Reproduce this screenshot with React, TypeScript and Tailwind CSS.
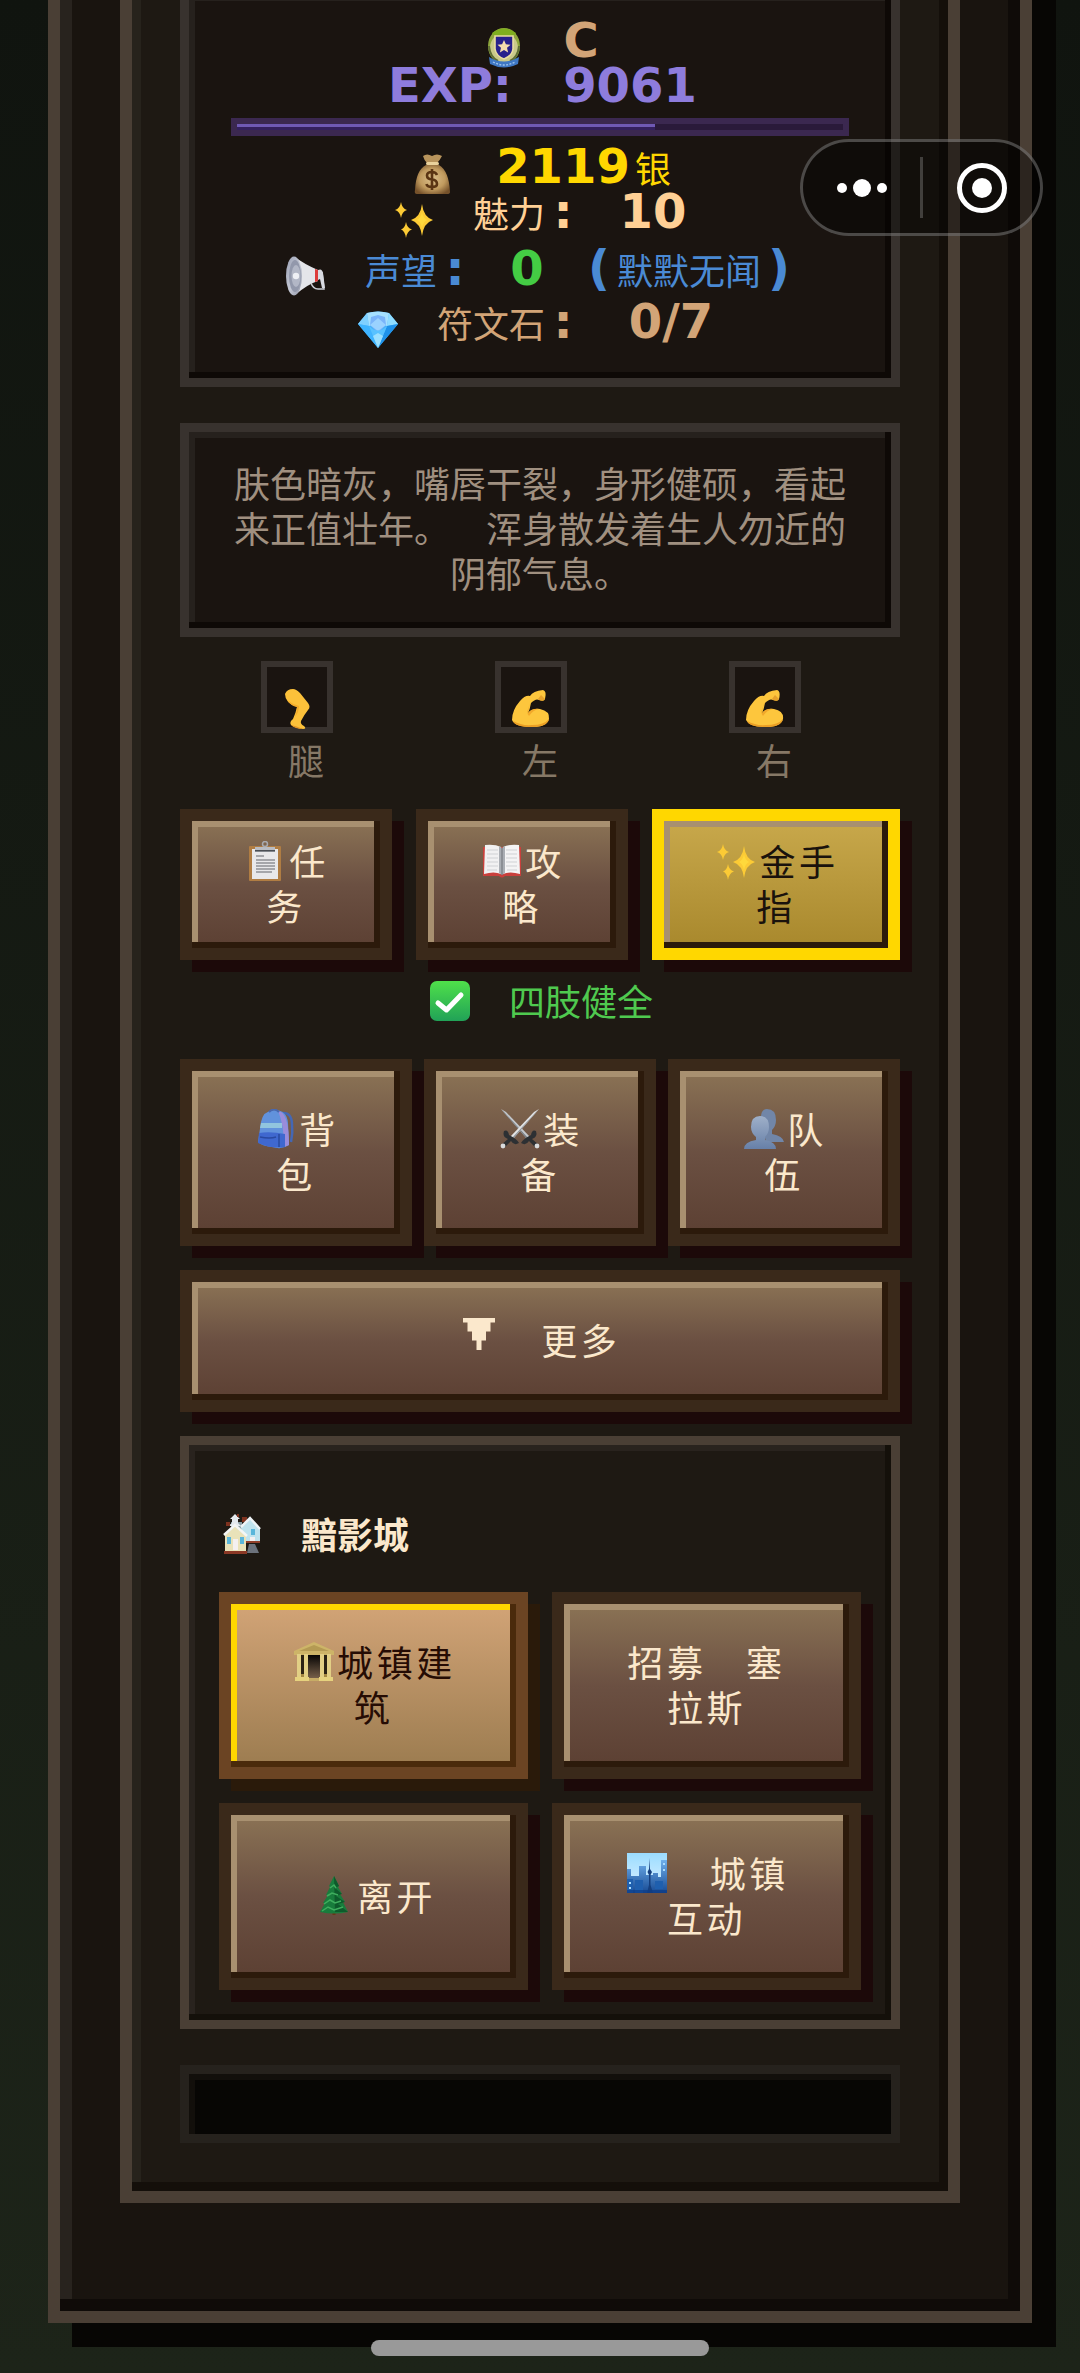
import type { ReactNode } from "react";

type IconProps = { className?: string };

const iconBase = "inline-block h-10 w-10 shrink-0";

function MedalIcon({ className = "" }: IconProps) {
  return (
    <svg viewBox="0 0 40 40" className={`${iconBase} ${className}`} aria-hidden="true">
      <ellipse cx="20" cy="18" rx="16" ry="18" fill="#8ea63c" />
      <ellipse cx="20" cy="20" rx="14" ry="15" fill="#c9c98a" />
      <path d="M8 5 Q20 -4 32 5 L29 9 H11Z" fill="#7fae1f" />
      <path d="M5 18 Q6 29 14 33" fill="none" stroke="#5e6d35" strokeWidth="2" />
      <path d="M35 18 Q34 29 26 33" fill="none" stroke="#5e6d35" strokeWidth="2" />
      <path d="M11 8 H29 V21 Q28 28 20 31 Q12 28 11 21Z" fill="#28218c" stroke="#e8dca0" strokeWidth="1.6" />
      <path d="M20 12 l1.9 4.3 4.6.4 -3.5 3.1 1.1 4.6 -4.1-2.4 -4.1 2.4 1.1-4.6 -3.5-3.1 4.6-.4z" fill="#f5dcae" />
      <path d="M5 29 Q20 38 35 29 L34 36 Q20 43 6 36Z" fill="#3f78c4" />
      <path d="M9 34 Q20 40 31 34" fill="none" stroke="#9cc4ee" strokeWidth="1.4" strokeDasharray="2 1.4" />
    </svg>
  );
}

function MoneyBagIcon({ className = "" }: IconProps) {
  return (
    <svg viewBox="0 0 40 40" className={`${iconBase} ${className}`} aria-hidden="true">
      <defs>
        <radialGradient id="bag" cx="50%" cy="48%" r="60%">
          <stop offset="0" stopColor="#dcc08c" />
          <stop offset="0.6" stopColor="#c09a5e" />
          <stop offset="1" stopColor="#75512a" />
        </radialGradient>
      </defs>
      <path d="M11 2 Q15 -1 20 2 Q25 -1 30 2 Q28 6 25 9 H15 Q12 6 11 2Z" fill="#b8945c" />
      <path d="M14 11 H27 Q37 17 38 38 Q38 40 35 40 H5 Q2 40 3 36 Q4 16 14 11Z" fill="url(#bag)" />
      <rect x="14" y="8" width="13" height="3" rx="1.5" fill="#ead29c" />
      <path d="M25 21 Q24 18 20 18 Q15 18 15 21.500 Q15 25 20 25.500 Q25 26 25 30 Q25 33 20 33 Q15 33 14.500 30 M20 15 V36" fill="none" stroke="#5b3513" strokeWidth="2.600" />
    </svg>
  );
}

function SparklesIcon({ className = "" }: IconProps) {
  return (
    <svg viewBox="0 0 40 40" className={`${iconBase} ${className}`} aria-hidden="true">
      <path d="M28 5 Q29.500 18 39 21 Q29.500 24 28 37 Q26.500 24 17 21 Q26.500 18 28 5Z" fill="#fccb35" />
      <path d="M28 13 Q29 19 33 21 Q29 23 28 29 Q27 23 23 21 Q27 19 28 13Z" fill="#ffd93c" />
      <path d="M7 3 Q8 9.500 13 11 Q8 12.500 7 19 Q6 12.500 1 11 Q6 9.500 7 3Z" fill="#fccb35" />
      <path d="M12 23 Q13 29 18 30.500 Q13 32 12 39 Q11 32 7 30.500 Q11 29 12 23Z" fill="#fccb35" />
    </svg>
  );
}

function MegaphoneIcon({ className = "" }: IconProps) {
  return (
    <svg viewBox="0 0 40 40" className={`${iconBase} ${className}`} aria-hidden="true">
      <defs>
        <linearGradient id="horn" x1="0" x2="1" y1="0" y2="1">
          <stop offset="0" stopColor="#9aa0b4" />
          <stop offset="0.55" stopColor="#c4c8d4" />
          <stop offset="1" stopColor="#8e93a5" />
        </linearGradient>
      </defs>
      <path d="M9 1 Q18 8 32 14 V25 Q22 28 9 39Z" fill="#e4e5ea" />
      <path d="M29 13 L32 14 V25 L29 26Z" fill="#dd3b3b" />
      <path d="M25 27 Q27 33 32 33 L38 33 L36 16" fill="none" stroke="#c9ccd4" strokeWidth="1.500" />
      <path d="M32 14 Q36 12 37 17 L39 32 H36 L34 23 L32 24Z" fill="#d8dae1" />
      <ellipse cx="8" cy="20" rx="8" ry="19.500" fill="url(#horn)" />
      <ellipse cx="9" cy="20" rx="6" ry="16" fill="#9298ab" />
      <ellipse cx="10" cy="20" rx="4.500" ry="11" fill="#b2b7c6" />
      <circle cx="10" cy="20" r="3.200" fill="#eef0f5" />
    </svg>
  );
}

function GemIcon({ className = "" }: IconProps) {
  return (
    <svg viewBox="0 0 40 40" className={`${iconBase} ${className}`} aria-hidden="true">
      <path d="M9 4 Q20 1 31 4 L40 15 L20 39 L0 15Z" fill="#45b2fb" />
      <path d="M9 4 L0 15 L11 17Z" fill="#7fd0ff" />
      <path d="M31 4 L40 15 L29 17Z" fill="#8fdcff" />
      <path d="M9 4 Q20 1 31 4 L29 17 Q20 12 11 17Z" fill="#a5e0ff" />
      <path d="M13 8 L20 6 L27 8 L28 16 L20 24 L12 16Z" fill="#79b4fa" />
      <path d="M12 16 L20 9 L28 16 L20 22Z" fill="#9ad2ff" />
      <path d="M0 15 L11 17 L20 39Z" fill="#3fb4ff" />
      <path d="M40 15 L29 17 L20 39Z" fill="#1f92ea" />
      <path d="M11 17 Q20 26 29 17 L20 39Z" fill="#58c2ff" />
      <path d="M15 27 L20 24 L25 27 L20 39Z" fill="#9be0ff" />
    </svg>
  );
}

function LegIcon({ className = "" }: IconProps) {
  return (
    <svg viewBox="0 0 40 40" className={`${iconBase} ${className}`} aria-hidden="true">
      <path d="M8 5 Q10 0 16 0 Q19 0 23 4 L31 14 Q34 18 31 21 Q27 26 24 32 Q23 35 27 37 Q30 40 26 40 Q18 39 14 36 Q12 33 16 30 Q19 23 20 18 Q8 14 8 5Z" fill="#fcc13a" />
      <path d="M10 11 Q14 17 20 18 Q20 23 18 28 Q22 23 22 17 Q15 15 10 11Z" fill="#f3ab2a" />
      <path d="M14 36 Q19 37 26 40 Q18 40 14 36Z" fill="#e29426" />
    </svg>
  );
}

function BicepsIcon({ className = "" }: IconProps) {
  return (
    <svg viewBox="0 0 40 40" className={`${iconBase} ${className}`} aria-hidden="true">
      <path d="M19 7 Q22 2 32 1 Q36 2 34 10 Q33 13 28 11 Q25 9 20 14 Q19 20 17 24 Q22 19 29 20 Q39 22 38 30 Q36 38 21 38 Q4 38 1 31 Q1 21 9 12 Q14 6 19 7Z" fill="#fdc63d" />
      <path d="M27 10 L30 6 L34 10 Q33 13 28 11Z" fill="#e6a12b" />
      <path d="M20 13 Q17 18 17 24 Q21 19 28 20 Q22 21 18 27 Q14 24 20 13Z" fill="#f2a92b" />
      <path d="M2 32 Q11 37 21 36 Q33 36 38 30 Q36 38 21 38 Q4 38 2 32Z" fill="#eb9f25" />
    </svg>
  );
}

function ClipboardIcon({ className = "" }: IconProps) {
  return (
    <svg viewBox="0 0 40 40" className={`${iconBase} ${className}`} aria-hidden="true">
      <rect x="3" y="5" width="32" height="35" rx="1" fill="#b07d43" />
      <rect x="6" y="8" width="26" height="30" fill="#e8e8ea" />
      <rect x="9" y="6" width="20" height="5" fill="#b9bcc2" />
      <rect x="9" y="9" width="20" height="1.500" fill="#4b4f55" />
      <circle cx="19" cy="3" r="2.500" fill="none" stroke="#a9abb0" strokeWidth="1.500" />
      <path d="M10 15 H18 M10 19 H29 M10 22 H29 M10 25 H29 M10 28 H29 M10 31 H26" stroke="#62656b" strokeWidth="1.200" />
    </svg>
  );
}

function BookIcon({ className = "" }: IconProps) {
  return (
    <svg viewBox="0 0 40 40" className={`${iconBase} ${className}`} aria-hidden="true">
      <path d="M1 6 H39 V35 H23 Q20 38 17 35 H1Z" fill="#c9403c" />
      <path d="M3 4 Q13 3 19 6 V33 Q12 30 2 33Z" fill="#f1f1f2" />
      <path d="M37 4 Q27 3 21 6 V33 Q28 30 38 33Z" fill="#f4f4f5" />
      <path d="M17 5 L20 7 L23 5 V32 L20 34 L17 32Z" fill="#aaaeb4" />
      <path d="M20 7 V34" stroke="#6d7076" strokeWidth="1" />
      <path d="M5 9 H16 M5 13 H16 M5 17 H16 M5 21 H16 M5 25 H16 M5 29 H15 M24 9 H35 M24 13 H35 M24 17 H35 M24 21 H35 M24 25 H35 M25 29 H35" stroke="#cfd1d4" strokeWidth="1" />
    </svg>
  );
}

function BackpackIcon({ className = "" }: IconProps) {
  return (
    <svg viewBox="0 0 40 40" className={`${iconBase} ${className}`} aria-hidden="true">
      <path d="M26 4 Q36 3 36 16 Q37 24 35 33" fill="none" stroke="#4467b4" strokeWidth="2.500" />
      <path d="M5 13 Q7 2 18 1 Q31 1 32 14 L33 36 Q26 41 16 38 Q6 37 2 33Z" fill="#6192dc" />
      <path d="M25 3 Q33 8 33 36 L28 38 Q28 15 22 2Z" fill="#998cdb" />
      <path d="M13 3 Q18 -2 23 3" fill="none" stroke="#4968ae" strokeWidth="2" />
      <path d="M5 14 H26 V19 H4Z" fill="#91c5de" />
      <path d="M3 24 Q14 22 29 25 L29 38 Q15 40 2 34Z" fill="#3f68cf" />
      <path d="M4 28 Q14 30 20 28 M23 25 V38" fill="none" stroke="#2949a0" strokeWidth="1.500" />
    </svg>
  );
}

function SwordsIcon({ className = "" }: IconProps) {
  return (
    <svg viewBox="0 0 40 40" className={`${iconBase} ${className}`} aria-hidden="true">
      <path d="M1 0 L6 3 L30 28 L27 30Z" fill="#c4c8cc" />
      <path d="M1 0 L4 3 L28 29 L27 30Z" fill="#767b80" />
      <path d="M39 0 L34 3 L10 28 L13 30Z" fill="#e2e4e6" />
      <path d="M39 0 L36 3 L12 29 L13 30Z" fill="#8d9297" />
      <path d="M4 22 Q8 20 9 26 Q17 30 19 34 Q14 37 11 32 L4 39 L1 36 L8 30 Q2 28 4 22Z" fill="#2d3033" />
      <path d="M36 22 Q32 20 31 26 Q23 30 21 34 Q26 37 29 32 L36 39 L39 36 L32 30 Q38 28 36 22Z" fill="#2d3033" />
      <circle cx="3" cy="37" r="2.400" fill="#d9dbdd" />
      <circle cx="37" cy="37" r="2.400" fill="#d9dbdd" />
    </svg>
  );
}

function PeopleIcon({ className = "" }: IconProps) {
  return (
    <svg viewBox="0 0 40 40" className={`${iconBase} ${className}`} aria-hidden="true">
      <defs>
        <linearGradient id="people" x1="0" x2="0" y1="0" y2="1">
          <stop offset="0" stopColor="#9fb0c9" />
          <stop offset="1" stopColor="#6780a8" />
        </linearGradient>
      </defs>
      <path d="M23 0 Q32 0 32 11 Q32 17 28 21 V25 Q39 27 40 33 H22 L17 12 Q16 0 23 0Z" fill="#7186a8" />
      <path d="M16 7 Q25 7 25 18 Q25 24 21 28 V31 Q32 33 32 40 H0 Q0 33 12 31 V28 Q7 24 7 18 Q7 7 16 7Z" fill="url(#people)" />
    </svg>
  );
}

function CheckIcon({ className = "" }: IconProps) {
  return (
    <svg viewBox="0 0 40 40" className={`${iconBase} ${className}`} aria-hidden="true">
      <defs>
        <linearGradient id="check" x1="0" x2="0" y1="0" y2="1">
          <stop offset="0" stopColor="#4fe04a" />
          <stop offset="1" stopColor="#21a257" />
        </linearGradient>
      </defs>
      <rect width="40" height="40" rx="7" fill="url(#check)" />
      <path d="M8 22 L16.500 29 L31 14" fill="none" stroke="#fff" strokeWidth="5" strokeLinecap="round" strokeLinejoin="round" />
    </svg>
  );
}

function HousesIcon({ className = "" }: IconProps) {
  return (
    <svg viewBox="0 0 40 40" className={`${iconBase} ${className}`} aria-hidden="true">
      <path d="M9 8 H20 V20 H9Z" fill="#8ba0a8" />
      <path d="M13 0 L18 5 H16 V9 L19 12 H6 L10 9 V5 H8Z" fill="#e4e9ee" />
      <path d="M4 8 H8 V12 H4Z M20 3 H25 V8 H20Z M15 0 H17 V3 H15Z" fill="#7d321f" />
      <path d="M19 13 L28 5 L38 15 V29 H22Z" fill="#bfe3ee" />
      <path d="M19 13 L28 4 L38 15" fill="none" stroke="#eef4f7" strokeWidth="2.500" />
      <path d="M23 29 H38 V27 H23Z" fill="#93402a" />
      <path d="M27 30 H33 L37 39 H25Z" fill="#6c727c" />
      <path d="M3 21 L13 12 L24 22 V37 H3Z" fill="#e9e2b9" />
      <path d="M2 21 L13 11 L25 22" fill="none" stroke="#f4f6f5" strokeWidth="2.500" />
      <rect x="2" y="37" width="23" height="3" fill="#8b3825" />
      <path d="M5 23 H9 V30 H5Z M18 23 H22 V30 H18Z M29 15 H33 V21 H29Z" fill="#5ab6da" />
      <path d="M11 25 H16 V36 H11Z M28 23 H33 V27 H28Z" fill="#f4f0f0" />
    </svg>
  );
}

function TempleIcon({ className = "" }: IconProps) {
  return (
    <svg viewBox="0 0 40 40" className={`${iconBase} ${className}`} aria-hidden="true">
      <defs>
        <linearGradient id="door" x1="0" x2="0" y1="0" y2="1">
          <stop offset="0" stopColor="#070504" />
          <stop offset="1" stopColor="#765f49" />
        </linearGradient>
      </defs>
      <path d="M0 9 L20 0 L40 9 V13 H0Z" fill="#cdb468" />
      <path d="M5 9 L20 3 L35 9Z" fill="#b49a53" />
      <rect x="5" y="13" width="30" height="22" fill="#a38742" />
      <rect x="14" y="13" width="12" height="23" fill="url(#door)" />
      <path d="M7 13 H10 V32 H7Z M30 13 H33 V32 H30Z" fill="#2b2214" />
      <path d="M3 12 H7 V35 H3Z M10 12 H14 V35 H10Z M26 12 H30 V35 H26Z M33 12 H37 V35 H33Z" fill="#e2cf85" />
      <path d="M1 35 H15 V39 H1Z M25 35 H39 V39 H25Z" fill="#e6d27e" />
      <rect x="15" y="36" width="10" height="3" fill="#c7ac66" />
    </svg>
  );
}

function TreeIcon({ className = "" }: IconProps) {
  return (
    <svg viewBox="0 0 40 40" className={`${iconBase} ${className}`} aria-hidden="true">
      <rect x="18.500" y="34" width="3" height="6" fill="#6c3518" />
      <path d="M20 1 L25 11 L24 12 L28 19 L26 19 L31 27 L29 27 L34 37 Q20 40 6 37 L11 28 L9 28 L14 20 L12 20 L16 12 L15 11Z" fill="#187c3c" />
      <path d="M20 1 L25 11 L21 13 L28 19 L22 21 L31 27 L24 29 L34 37 L21 37Z" fill="#0d5b2b" />
      <path d="M16 13 L20 10 L22 13 M13 21 L18 18 L24 20 M10 29 L16 25 L21 28 L27 26 M8 36 L14 32 L20 35 L29 32" fill="none" stroke="#3fae5e" strokeWidth="1.500" />
    </svg>
  );
}

function CityIcon({ className = "" }: IconProps) {
  return (
    <svg viewBox="0 0 40 40" className={`${iconBase} ${className}`} aria-hidden="true">
      <defs>
        <linearGradient id="sky" x1="0" x2="0" y1="0" y2="1">
          <stop offset="0" stopColor="#9bdcff" />
          <stop offset="1" stopColor="#dff2ff" />
        </linearGradient>
        <linearGradient id="tower" x1="0" x2="0" y1="0" y2="1">
          <stop offset="0" stopColor="#6fb0ec" />
          <stop offset="1" stopColor="#174a94" />
        </linearGradient>
      </defs>
      <rect width="40" height="40" fill="url(#sky)" />
      <path d="M0 16 H4 V23 H12 V13 H19 V22 H26 V20 H31 V24 H34 V7 H40 V40 H0Z" fill="url(#tower)" />
      <path d="M23 5 V16 L25 19 L23.500 22 V32 L26 40 H20 L22 32 V22 L20.500 19 L22 16Z" fill="#153f7e" />
      <path d="M0 26 H6 V40 H0Z M28 28 H36 V36 H28Z M8 27 H16 V40 H8Z" fill="#1f5fae" />
      <path d="M2 29 H4 V31 H2Z M2 34 H4 V36 H2Z M36 10 H38 V12 H36Z M36 16 H38 V18 H36Z M30 31 H34" fill="#a9dcff" />
      <rect y="37" width="40" height="3" fill="#0d3c86" opacity=".7" />
    </svg>
  );
}

function DownIcon({ className = "" }: IconProps) {
  return (
    <svg viewBox="0 0 36 36" className={`inline-block h-9 w-9 ${className}`} aria-hidden="true">
      <path d="M0 0 H32 V4.500 H27.500 V13.500 H23 V22.500 H18.500 V32 H13.500 V22.500 H9 V13.500 H4.500 V4.500 H0Z" fill="#fbe8cc" />
    </svg>
  );
}

const pixelFont = "inline-block text-center text-5xl font-bold leading-[45px] [font-family:'DejaVu_Sans',sans-serif]";

function StatRow({ icon, className = "", children }: { icon?: ReactNode; className?: string; children: ReactNode }) {
  return (
    <div className={`flex h-[45px] items-baseline justify-center whitespace-pre ${className}`}>
      {icon && <span className="mx-[3px] [&>svg]:-mb-0.5">{icon}</span>}
      {icon && <span>{"\u3000"}</span>}
      {children}
    </div>
  );
}

const buttonVariants = {
  normal:
    "border-[#3a291a] bg-linear-to-b from-[#8b7355] via-[#6b5042] to-[#5c4033] text-[#fbe8cc] shadow-[inset_-6px_-6px_0_#2c1a0b,inset_6px_6px_0_#a89070,12px_12px_0_#1c0909]",
  gold:
    "border-[#ffd700] bg-linear-to-b from-[#c8a84b] to-[#a8882c] text-[#1a120c] shadow-[inset_-6px_-6px_0_#2c1a0b,inset_6px_6px_0_#a89070,12px_12px_0_#1c0909]",
  primary:
    "border-[#6b4423] bg-linear-to-b from-[#d2a477] to-[#9c7c50] text-[#260c04] shadow-[inset_-6px_-6px_0_#4a2a0b,inset_6px_6px_0_#ffd700,12px_12px_0_#2a1a0a]",
};

const buttonSizes = {
  sm: "pt-[17px] pb-5",
  lg: "pt-[35px] pb-[38px]",
};

type PixelButtonProps = {
  variant?: keyof typeof buttonVariants;
  size?: keyof typeof buttonSizes;
  icon?: ReactNode;
  lines: string[];
  className?: string;
};

function PixelButton({ variant = "normal", size = "lg", icon, lines, className = "" }: PixelButtonProps) {
  return (
    <button
      type="button"
      className={`flex flex-col items-center justify-center border-12 tracking-widest ${buttonSizes[size]} ${buttonVariants[variant]} ${className}`}
    >
      {lines.map((line, i) => (
        <span key={line} className="flex h-[45px] items-center whitespace-pre">
          {i === 0 && icon && <span className="mx-[3px] flex">{icon}</span>}
          {line}
        </span>
      ))}
    </button>
  );
}

const limbs = [
  { label: "腿", icon: <LegIcon /> },
  { label: "左", icon: <BicepsIcon /> },
  { label: "右", icon: <BicepsIcon /> },
];

export default function App() {
  return (
    <div className="min-h-screen bg-linear-to-b from-[#10140f] to-[#1d2419] px-12 pb-11 text-4xl leading-[45px] [font-family:'Noto_Sans_CJK_SC',sans-serif]">
      <main className="border-x-12 border-b-12 border-[#4a3f35] bg-[#19140f] px-[60px] pb-[108px] shadow-[inset_-12px_-12px_0_#0f0b08,inset_12px_0_0_#28231e,24px_24px_0_#070604,24px_0_0_#070604]">
        <div className="border-x-12 border-b-12 border-[#4a3f35] bg-[#1e1913] px-12 pb-12 shadow-[inset_-9px_-9px_0_#140f0a,inset_9px_0_0_#27231c]">
          {/* character stats */}
          <section className="border-x-9 border-b-9 border-[#38322e] bg-[#1a1410] px-[42px] pt-[18px] pb-[34px] shadow-[inset_-6px_-6px_0_#0e0906,inset_6px_1px_0_#26211d]">
            <StatRow className="text-[#d2a477]" icon={<MedalIcon />}>
              <span className={`w-9 ${pixelFont}`}>C</span>
            </StatRow>
            <StatRow className="text-[#8e7cdc]">
              <span className={`w-36 ${pixelFont}`}>EXP:</span>
              <span>{"\u3000"}</span>
              <span className={`w-36 ${pixelFont}`}>9061</span>
            </StatRow>
            <div className="mt-2.5 mb-2 h-[18px] border-6 border-[#3b2850] bg-[#2a1a3a]">
              <div className="h-full w-[69%] border-t-3 border-[#6f59b4] bg-[#34205e]" />
            </div>
            <StatRow className="text-[#ffd700]" icon={<MoneyBagIcon />}>
              <span className={`w-36 ${pixelFont}`}>2119</span>
              <span>银</span>
            </StatRow>
            <StatRow className="text-[#ffd095]" icon={<SparklesIcon />}>
              <span>魅力</span>
              <span className={`w-9 ${pixelFont}`}>:</span>
              <span>{"\u3000"}</span>
              <span className={`w-[72px] ${pixelFont}`}>10</span>
            </StatRow>
            <StatRow className="mt-3 text-[#4a8ad4]" icon={<MegaphoneIcon />}>
              <span>声望</span>
              <span className={`w-9 ${pixelFont}`}>:</span>
              <span>{"\u3000"}</span>
              <span className={`w-9 text-[#44cc44] ${pixelFont}`}>0</span>
              <span>{"\u3000"}</span>
              <span className={`w-9 ${pixelFont}`}>(</span>
              <span>默默无闻</span>
              <span className={`w-9 ${pixelFont}`}>)</span>
            </StatRow>
            <StatRow className="mt-2 text-[#d2a477]" icon={<GemIcon />}>
              <span>符文石</span>
              <span className={`w-9 ${pixelFont}`}>:</span>
              <span>{"\u3000"}</span>
              <span className={`w-[108px] ${pixelFont}`}>0/7</span>
            </StatRow>
          </section>

          <p className="mt-9 border-9 border-[#38322e] bg-[#1a1410] px-[42px] pt-7 pb-[33px] text-center text-[#a09080] shadow-[inset_-6px_-6px_0_#0e0906,inset_6px_6px_0_#26211d] [text-spacing-trim:space-all]">
            肤色暗灰，嘴唇干裂，身形健硕，看起来正值壮年。{"\u3000"}浑身散发着生人勿近的阴郁气息。
          </p>

          <div className="mt-6 grid grid-cols-3 pr-[18px]">
            {limbs.map((limb) => (
              <div key={limb.label} className="flex flex-col items-center">
                <div className="flex h-[72px] w-[72px] items-end justify-center border-6 border-[#38322e] bg-[#1a1410] [&>svg]:-mb-0.5">
                  {limb.icon}
                </div>
                <span className="mt-1 pl-[18px] text-[#867866]">{limb.label}</span>
              </div>
            ))}
          </div>

          <div className="mt-[27px] grid grid-cols-[212fr_212fr_248fr] gap-6">
            <PixelButton size="sm" icon={<ClipboardIcon />} lines={["任", "务"]} />
            <PixelButton size="sm" icon={<BookIcon />} lines={["攻", "略"]} />
            <PixelButton size="sm" variant="gold" icon={<SparklesIcon />} lines={["金手", "指"]} />
          </div>

          <div className="mt-[18px] flex items-center justify-center whitespace-pre text-[#4fc94f]">
            <CheckIcon className="mx-[3px]" />
            {"\u3000"}四肢健全
          </div>

          <div className="mt-9 grid grid-cols-3 gap-3">
            <PixelButton icon={<BackpackIcon />} lines={["背", "包"]} />
            <PixelButton icon={<SwordsIcon />} lines={["装", "备"]} />
            <PixelButton icon={<PeopleIcon />} lines={["队", "伍"]} />
          </div>

          <PixelButton className="mt-6 w-full" icon={<DownIcon className="mb-2" />} lines={["\u3000更多"]} />

          {/* current town */}
          <section className="mt-6 border-9 border-[#4a3f35] p-[30px] shadow-[inset_-6px_-6px_0_#14100a,inset_6px_6px_0_#29231e]">
            <h2 className="my-9 flex items-center font-bold whitespace-pre text-[#fbe8cc]">
              <HousesIcon className="mx-[3px]" />
              {"\u3000"}黯影城
            </h2>
            <div className="grid grid-cols-2 gap-6">
              <PixelButton variant="primary" icon={<TempleIcon />} lines={["城镇建", "筑"]} />
              <PixelButton lines={["招募\u3000塞", "拉斯"]} />
              <PixelButton icon={<TreeIcon />} lines={["离开"]} />
              <PixelButton icon={<CityIcon />} lines={["\u3000城镇", "互动"]} />
            </div>
          </section>

          <div role="log" className="mt-9 h-[78px] border-9 border-[#26221d] bg-[#070604] shadow-[inset_6px_6px_0_#120f0b]" />
        </div>
      </main>

      <div className="fixed top-[139px] right-[37px] flex h-[97px] w-[243px] items-center rounded-full border-3 border-white/25 bg-black/40">
        <button type="button" aria-label="菜单" className="flex flex-1 items-center justify-center gap-1.5">
          <span className="h-2.5 w-2.5 rounded-full bg-white" />
          <span className="h-[18px] w-[18px] rounded-full bg-white" />
          <span className="h-2.5 w-2.5 rounded-full bg-white" />
        </button>
        <span className="h-[61px] w-[3px] bg-white/20" />
        <button type="button" aria-label="关闭" className="flex flex-1 items-center justify-center">
          <span className="flex h-[50px] w-[50px] items-center justify-center rounded-full border-5 border-white">
            <span className="h-5 w-5 rounded-full bg-white" />
          </span>
        </button>
      </div>

      <div className="fixed bottom-[17px] left-1/2 h-4 w-[338px] -translate-x-1/2 rounded-full bg-[#999]" />
    </div>
  );
}
